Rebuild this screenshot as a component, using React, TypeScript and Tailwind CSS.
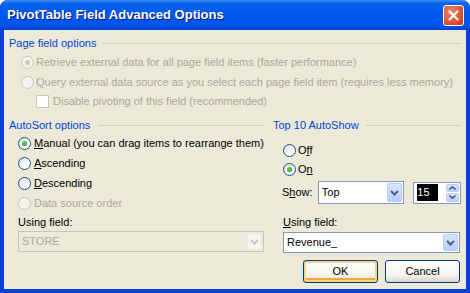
import React from 'react'

// XP Luna 라디오 버튼
function Radio({ checked = false, disabled = false }: { checked?: boolean; disabled?: boolean }) {
  return (
    <span
      className={
        'flex h-[13px] w-[13px] shrink-0 items-center justify-center rounded-full border ' +
        (disabled
          ? 'border-[#CAC8BB] bg-[#F4F3EE]'
          : 'border-[#1C5180] bg-[linear-gradient(135deg,#DCDCD7,#FFFFFF_70%)]')
      }
    >
      {checked && (
        <span
          className={
            'h-[5px] w-[5px] rounded-full ' +
            (disabled ? 'bg-[#CAC8BB]' : 'bg-[radial-gradient(circle_at_35%_35%,#55D34F,#21A121)]')
          }
        />
      )}
    </span>
  )
}

function Checkbox({ disabled = false }: { disabled?: boolean }) {
  return (
    <span
      className={
        'h-[13px] w-[13px] shrink-0 border ' +
        (disabled ? 'border-[#CAC8BB] bg-white' : 'border-[#1C5180] bg-white')
      }
    />
  )
}

function GroupHeader({ label, lineClass }: { label: string; lineClass: string }) {
  return (
    <div className="flex h-[16px] items-center">
      <span className="text-[#0046D5]">{label}</span>
      <span className={'h-px bg-[#D0D0BF] ' + lineClass} />
    </div>
  )
}

function Chevron({ color }: { color: string }) {
  return (
    <svg width="9" height="6" viewBox="0 0 9 6">
      <path d="M1 1 L4.5 4.5 L8 1" fill="none" stroke={color} strokeWidth="2" />
    </svg>
  )
}

function DropButton({ disabled = false }: { disabled?: boolean }) {
  return (
    <span
      className={
        'm-px flex w-[15px] items-center justify-center rounded-[2px] border ' +
        (disabled
          ? 'border-[#E8E6DE] bg-[#F6F5F1]'
          : 'border-[#B9CCF6] bg-[linear-gradient(180deg,#D9E5FD,#B9CDF9)]')
      }
    >
      <Chevron color={disabled ? '#C9C7BA' : '#4D6185'} />
    </span>
  )
}

function Combo({
  value,
  disabled = false,
  className,
}: {
  value: string
  disabled?: boolean
  className: string
}) {
  return (
    <div
      className={
        'flex border ' +
        (disabled ? 'border-[#C9C7BA] bg-[#ECE9D8] text-[#ACA899]' : 'border-[#7F9DB9] bg-white') +
        ' ' +
        className
      }
    >
      <span className="flex flex-1 items-center pl-[3px]">{value}</span>
      <DropButton disabled={disabled} />
    </div>
  )
}

function XpButton({ label, isDefault = false }: { label: string; isDefault?: boolean }) {
  return (
    <div
      className={
        'flex h-[23px] w-[75px] items-center justify-center rounded-[3px] border border-[#003C74] bg-[linear-gradient(180deg,#FFFFFF,#F3F2EC_70%,#D9D5C9)] ' +
        (isDefault ? 'shadow-[inset_0_0_0_2px_#F7D48B,inset_0_-2px_0_2px_#F0A83A]' : '')
      }
    >
      {label}
    </div>
  )
}

export default function App() {
  return (
    <div className="flex h-[293px] w-[470px] flex-col overflow-hidden rounded-t-[8px] bg-[#0840D8] font-['Liberation_Sans',Tahoma,sans-serif] text-[11px] text-black">
      {/* 타이틀 바 */}
      <div className="flex h-[30px] shrink-0 items-center justify-between bg-[linear-gradient(180deg,#3B8CF7_0%,#0A62EC_12%,#0058EE_45%,#0055E8_85%,#0040D4_100%)] pl-[7px] pr-[6px]">
        <span className="text-[13px] font-bold text-white [text-shadow:1px_1px_0_#0A1883]">
          PivotTable Field Advanced Options
        </span>
        <span className="flex h-[21px] w-[21px] items-center justify-center rounded-[3px] border border-white bg-[radial-gradient(circle_at_35%_30%,#F08A6C,#D7451F_75%,#C23A18)]">
          <svg width="11" height="11" viewBox="0 0 11 11">
            <path d="M1.5 1.5 L9.5 9.5 M9.5 1.5 L1.5 9.5" stroke="white" strokeWidth="2.2" strokeLinecap="round" />
          </svg>
        </span>
      </div>

      {/* 본문 */}
      <div className="mx-[4px] mb-[4px] flex flex-1 flex-col bg-[#ECE9D8] pl-[5px] pr-[5px] pt-[5px]">
        <GroupHeader label="Page field options" lineClass="ml-[7px] flex-1" />
        <div className="mt-px flex h-[20px] items-center gap-[2px] pl-[12px] text-[#ACA899]">
          <Radio checked disabled />
          <span>Retrieve external data for all page field items (faster performance)</span>
        </div>
        <div className="flex h-[20px] items-center gap-[2px] pl-[12px] text-[#ACA899]">
          <Radio disabled />
          <span>Query external data source as you select each page field item (requires less memory)</span>
        </div>
        <div className="flex h-[19px] items-center gap-[4px] pl-[27px] text-[#ACA899]">
          <Checkbox disabled />
          <span>Disable pivoting of this field (recommended)</span>
        </div>

        <div className="mt-[6px] flex gap-[8px]">
          {/* AutoSort */}
          <div className="flex w-[256px] flex-col">
            <GroupHeader label="AutoSort options" lineClass="ml-[8px] w-[165px]" />
            <div className="flex h-[20px] items-center gap-[3px] pl-[9px]">
              <Radio checked />
              <span>
                <u>M</u>anual (you can drag items to rearrange them)
              </span>
            </div>
            <div className="flex h-[20px] items-center gap-[3px] pl-[9px]">
              <Radio />
              <span>
                <u>A</u>scending
              </span>
            </div>
            <div className="flex h-[20px] items-center gap-[3px] pl-[9px]">
              <Radio />
              <span>
                <u>D</u>escending
              </span>
            </div>
            <div className="flex h-[20px] items-center gap-[3px] pl-[9px] text-[#ACA899]">
              <Radio disabled />
              <span>Data source order</span>
            </div>
            <div className="flex h-[18px] items-center pl-[9px]">
              <span>
                Usin<u>g</u> field:
              </span>
            </div>
            <Combo value="STORE" disabled className="ml-[9px] h-[21px] w-[246px]" />
          </div>

          {/* Top 10 AutoShow */}
          <div className="flex w-[188px] flex-col">
            <GroupHeader label="Top 10 AutoShow" lineClass="ml-[7px] flex-1" />
            <div className="mt-[7px] flex h-[20px] items-center gap-[2px] pl-[10px]">
              <Radio />
              <span>
                O<u>f</u>f
              </span>
            </div>
            <div className="flex h-[19px] items-center gap-[2px] pl-[10px]">
              <Radio checked />
              <span>
                O<u>n</u>
              </span>
            </div>
            <div className="mt-[2px] flex h-[23px] items-center pl-[9px]">
              <span className="w-[36px]">
                S<u>h</u>ow:
              </span>
              <Combo value="Top" className="h-[23px] w-[87px]" />
              <div className="ml-[9px] flex h-[22px] w-[48px] border border-[#7F9DB9] bg-white">
                <span className="flex flex-1 items-center pl-[3px]">
                  <span className="bg-black pr-[8px] text-white">15</span>
                </span>
                <span className="m-px flex w-[13px] flex-col gap-px">
                  <span className="flex flex-1 items-center justify-center rounded-[2px] border border-[#B9CCF6] bg-[linear-gradient(180deg,#D9E5FD,#B9CDF9)]">
                    <svg width="7" height="4" viewBox="0 0 7 4">
                      <path d="M0.5 3.5 L3.5 0.8 L6.5 3.5" fill="none" stroke="#4D6185" strokeWidth="1.6" />
                    </svg>
                  </span>
                  <span className="flex flex-1 items-center justify-center rounded-[2px] border border-[#B9CCF6] bg-[linear-gradient(180deg,#D9E5FD,#B9CDF9)]">
                    <svg width="7" height="4" viewBox="0 0 7 4">
                      <path d="M0.5 0.5 L3.5 3.2 L6.5 0.5" fill="none" stroke="#4D6185" strokeWidth="1.6" />
                    </svg>
                  </span>
                </span>
              </div>
            </div>
            <div className="mt-[9px] flex h-[18px] items-center pl-[10px]">
              <span>
                <u>U</u>sing field:
              </span>
            </div>
            <Combo value="Revenue_" className="ml-[10px] mt-px h-[21px] w-[177px]" />
            <div className="mt-[7px] flex justify-end gap-[7px] pr-px">
              <XpButton label="OK" isDefault />
              <XpButton label="Cancel" />
            </div>
          </div>
        </div>
      </div>
    </div>
  )
}
